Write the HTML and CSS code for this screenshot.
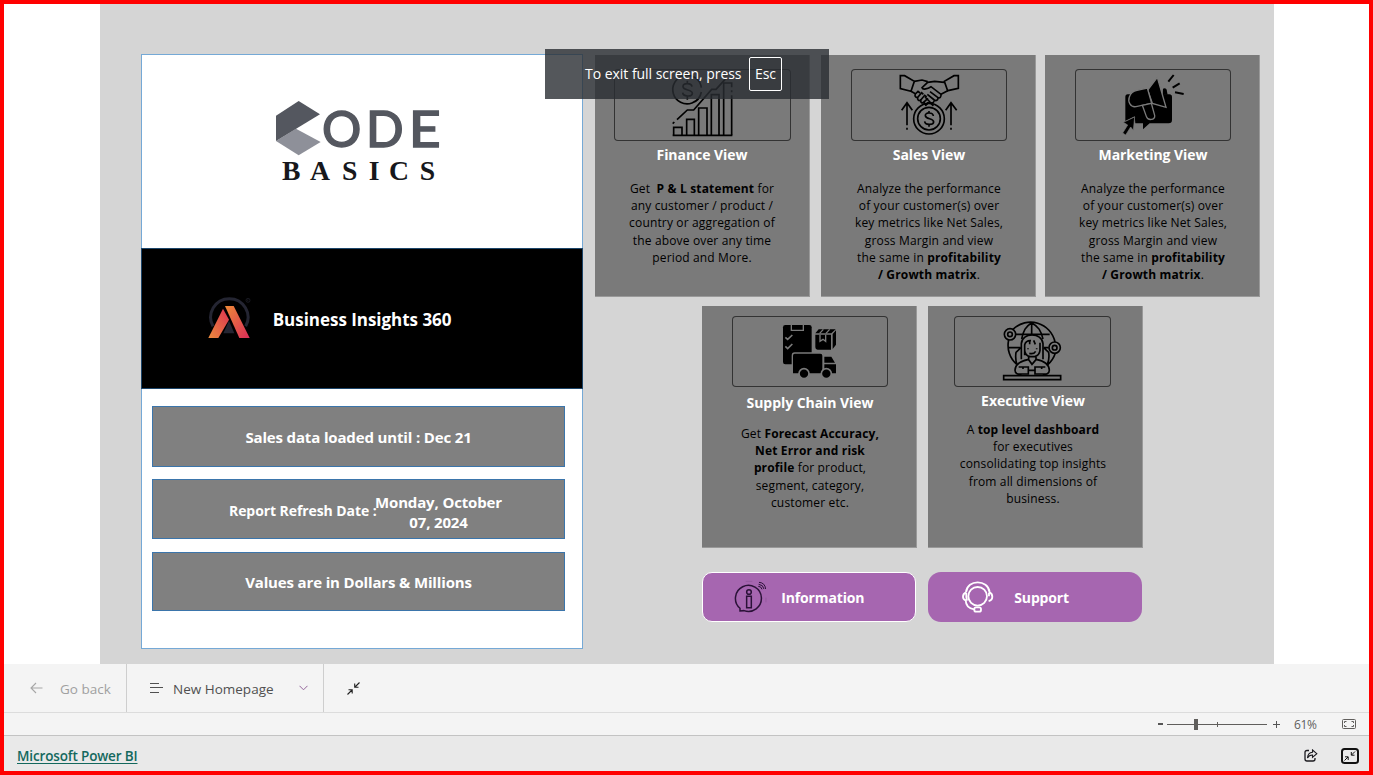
FILE: index.html
```html
<!DOCTYPE html>
<html lang="en">
<head>
<meta charset="utf-8">
<title>Business Insights 360</title>
<link rel="stylesheet" href="styles.css">
</head>
<body>
<div class="frame">
  <main class="stage">
    <div class="canvas">
      <section class="panel">
        <div class="brand">
          <svg class="brand-logo" viewBox="0 0 600 300">
            <path fill="#8e9099" d="M108 116 182 156 116 196 48 153z"/>
            <path fill="#54575f" d="M116 33 180 73 48 153V77z"/>
            <g class="logo-sans"><text x="186" y="170" textLength="118" lengthAdjust="spacingAndGlyphs">O</text><text x="318" y="170" textLength="113" lengthAdjust="spacingAndGlyphs">D</text><text x="446" y="170" textLength="96" lengthAdjust="spacingAndGlyphs">E</text></g>
            <text class="logo-serif" x="66 150 246 326 387 479" y="270">BASICS</text>
          </svg>
        </div>
        <div class="title-band">
          <svg class="title-logo" viewBox="50 45 140 135">
            <defs>
              <linearGradient id="ga" x1="0" y1="1" x2="1" y2="0"><stop offset="0" stop-color="#ec8b3d"/><stop offset="1" stop-color="#dc3152"/></linearGradient>
              <linearGradient id="gb" x1="0" y1="0" x2="1" y2="1"><stop offset="0" stop-color="#ee8a38"/><stop offset="1" stop-color="#da2c58"/></linearGradient>
            </defs>
            <path d="M68 139A56 56 0 1 1 166 139" fill="none" stroke="#242532" stroke-width="9"/>
            <path d="M116 122 132 160H99z" fill="#242532"/>
            <path d="M98 86 116 119 84 174H54z" fill="url(#ga)"/>
            <path d="M104 78H130L178 174H147z" fill="url(#gb)"/>
            <circle cx="173" cy="61" r="6" fill="none" stroke="#242532" stroke-width="2"/><path d="M171 64v-6h3v3h-3l3 3" fill="none" stroke="#242532"/>
          </svg>
          <h1>Business Insights 360</h1>
        </div>
        <div class="facts">
          <div class="fact fact-a"><span>Sales data loaded until : Dec 21</span></div>
          <div class="fact fact-b"><span class="refresh">Report Refresh Date :</span><span class="date">Monday, October<br>07, 2024</span></div>
          <div class="fact fact-c"><span>Values are in Dollars &amp; Millions</span></div>
        </div>
      </section>

      <section class="views">
        <div class="row row-top">
          <article class="card">
            <div class="icon-box finance">
              <svg viewBox="222 87 531 216" fill="none" stroke="#000" stroke-width="5">
                <path d="M398 286H577"/><path d="M401 286V262H426V286M440 286V238H463V286M476 286V204H501V286M514 286V164H537V286M551 286V129H575V142M575 166V286M575 151V157"/>
                <path d="M411 239 442 210H461L515 148H528L558 115H566M398 251l5-5"/>
                <path d="M456 189A43 43 0 1 1 484 143M484 156A43 43 0 0 1 456 189"/>
                <path d="M456 140C455 129 428 127 429 140 430 153 457 147 457 160 456 172 429 170 428 158M442 122V131M442 169V179"/>
              </svg>
            </div>
            <h2>Finance View</h2>
            <p>Get&nbsp; <b>P &amp; L statement</b> for<br>any customer / product /<br>country or aggregation of<br>the above over any time<br>period and More.</p>
          </article>
          <article class="card">
            <div class="icon-box">
              <svg viewBox="33 42 468 216" fill="none" stroke="#000" stroke-width="5">
                <path d="M181 62H194L223 79 213 109 181 101zM355 62H342L313 79 323 107 355 100z"/>
                <path d="M223 79 246 75 263 80M313 82 284 79 263 82 246 98C249 106 263 101 273 95L303 118 323 107M213 109 226 116"/>
                <path d="M303 118C304 127 299 130 294 128 294 136 288 139 283 135 282 144 276 147 269 141M270 110 294 128M262 118 283 135M255 126 270 141"/>
                <path d="M226 117C223 124 228 129 234 126 230 134 237 140 243 134 240 143 247 147 253 140 251 148 260 151 266 142M226 117 234 109 240 114M234 126 245 113 250 118M243 134 254 121 260 126M253 140 264 130"/>
                <circle cx="267" cy="191" r="46"/><circle cx="267" cy="191" r="34"/>
                <path d="M256 153 263 144H272L280 153"/>
                <path d="M280 183C279 171 255 171 256 182 257 194 281 189 281 201 280 211 255 211 254 199M267 168V175M267 207V215"/>
                <path d="M201 211V144M185 166 201 143 217 166M333 211V144M317 166 333 143 350 166M201 218V224M333 218V224"/>
              </svg>
            </div>
            <h2>Sales View</h2>
            <p>Analyze the performance<br>of your customer(s) over<br>key metrics like Net Sales,<br>gross Margin and view<br>the same in <b>profitability<br>/ Growth matrix</b>.</p>
          </article>
          <article class="card">
            <div class="icon-box">
              <svg viewBox="45 42 468 216">
                <path d="M203 118H328Q336 118 336 126V195Q336 205 326 205H269L249 223V205H226L224 184 196 198V126Q196 118 203 118z"/>
                <path d="M309 101Q320 97 321 110L323 119H308z"/>
                <path d="M292 67 318 157 277 145 263 105z" stroke="#7a7a7a" stroke-width="4"/>
                <path d="M262 99 275 145 228 155C211 158 203 140 208 126 212 114 220 108 231 106z" stroke="#7a7a7a" stroke-width="4"/>
                <path d="M247 151 274 145 284 181C287 196 263 198 259 184z" stroke="#7a7a7a" stroke-width="4"/>
                <path d="M224 186 190 202 203 210 188 234 197 240 212 216 220 226z" stroke="#7a7a7a" stroke-width="2"/>
                <g stroke="#000" stroke-width="6"><path d="M325 80 341 60M338 98 359 85M345 112 371 117"/></g>
              </svg>
            </div>
            <h2>Marketing View</h2>
            <p>Analyze the performance<br>of your customer(s) over<br>key metrics like Net Sales,<br>gross Margin and view<br>the same in <b>profitability<br>/ Growth matrix</b>.</p>
          </article>
        </div>
        <div class="row row-mid">
          <article class="card">
            <div class="icon-box low">
              <svg viewBox="96 48 468 213">
                <rect x="249" y="75" width="86" height="118" rx="7"/>
                <path d="M274 74V91H310V74" fill="none" stroke="#7a7a7a" stroke-width="4"/>
                <path d="M256 112 263 118 277 105M256 139 263 146 277 132" fill="none" stroke="#7a7a7a" stroke-width="5"/>
                <path d="M356 88H407L394 100H346zM346 104H393V149H353Q346 149 346 142zM398 102 408 91V134L398 147z"/>
                <path d="M370 88 359 100M389 88 378 100M360 104V124L369 118 377 124V104" fill="none" stroke="#7a7a7a" stroke-width="4"/>
                <path d="M284 159H361Q369 159 369 167V222H277V167Q277 159 284 159z" stroke="#7a7a7a" stroke-width="4"/>
                <path d="M373 170H394L405 188H373zM373 193H408V220H373z"/>
                <circle cx="312" cy="221" r="15" stroke="#7a7a7a" stroke-width="5"/><circle cx="379" cy="221" r="15" stroke="#7a7a7a" stroke-width="5"/>
              </svg>
            </div>
            <h2>Supply Chain View</h2>
            <p class="supply">Get <b>Forecast Accuracy,<br>Net Error and risk<br>profile</b> for product,<br>segment, category,<br>customer etc.</p>
          </article>
          <article class="card">
            <div class="icon-box exec">
              <svg viewBox="87 48 471 213" fill="none" stroke="#000" stroke-width="5">
                <path d="M264 88A75 75 0 0 1 390 126M251 120A75 75 0 0 0 275 193M391 159A75 75 0 0 1 367 195M320 69V105M320 69C302 79 295 92 290 117M320 69C340 79 348 92 354 117M271 103H374M250 143H287M356 143H371M288 143 273 157Q270 177 276 193M356 143 371 157Q374 177 367 193"/>
                <circle cx="255" cy="103" r="17"/><circle cx="255" cy="103" r="7"/><circle cx="389" cy="143" r="17"/><circle cx="389" cy="143" r="7"/>
                <path d="M289 178V131C291 96 351 96 354 131V178M299 166V134Q303 121 318 122M345 128V151Q343 166 329 170H316Q300 167 299 151M314 121V133M326 121 331 133M309 145V148M335 145V148M313 160Q326 164 332 154M311 171V179L321 193 333 179V171"/>
                <path d="M311 178C286 183 270 194 270 211 270 221 279 224 291 222H310V201H281M333 178C358 183 373 194 373 211 373 221 364 224 352 222H330V201H361M310 211H330M294 201V207M350 201V207"/>
                <path d="M236 227H407V239H236z"/>
              </svg>
            </div>
            <h2 class="exec-title">Executive View</h2>
            <p class="exec-text">A <b>top level dashboard</b><br>for executives<br>consolidating top insights<br>from all dimensions of<br>business.</p>
          </article>
        </div>
        <div class="row row-buttons">
          <div class="pill outlined">
            <svg class="info-icon" viewBox="115 45 100 100" fill="none" stroke="#2b1238" stroke-width="4.5">
              <path d="M133 130A39 39 0 1 1 145 137L133 138z"/><circle cx="160" cy="81" r="7"/><path d="M153 94H167V128H153z"/>
              <path d="M188 64Q197 64 199 73M189 58Q203 59 205 72M190 52Q208 53 210 72" stroke-width="3"/><path d="M211 98v14M150 49h20" stroke-width="1" opacity=".4"/>
            </svg>
            <span>Information</span>
          </div>
          <div class="pill solid">
            <svg class="support-icon" viewBox="797 45 100 100" fill="none" stroke="#fff" stroke-width="5.5">
              <circle cx="847" cy="94" r="28"/>
              <path d="M812 82C816 42 878 42 883 82Q891 86 891 95 891 106 880 108M812 82Q803 86 803 95 803 103 811 106Q812 130 836 133M881 83V94M813 84Q812 94 815 107"/>
              <rect x="837" y="127" width="20" height="13" rx="5"/>
            </svg>
            <span>Support</span>
          </div>
        </div>
      </section>
    </div>
    <div class="toast"><span>To exit full screen, press</span><kbd>Esc</kbd></div>
  </main>

  <nav class="toolbar">
    <div class="tool back">
      <svg width="13" height="12" viewBox="0 0 13 12" fill="none" stroke="#a6a6a6" stroke-width="1.1"><path d="M12.5 6H1M6 1 1 6l5 5"/></svg>
      <span>Go back</span>
    </div>
    <div class="tool pages">
      <svg width="13" height="10" viewBox="0 0 13 10" stroke="#505050"><path d="M0 .5H9M0 4.500H13M0 9.500H9"/></svg>
      <span>New Homepage</span>
      <svg class="chev" width="9" height="6" viewBox="0 0 9 6" fill="none" stroke="#93659b"><path d="M.5.8 4.500 4.800 8.500.8"/></svg>
    </div>
    <div class="tool shrink">
      <svg width="13" height="13" viewBox="0 0 13 13" fill="none" stroke="#222" stroke-width="1.1"><path d="M12.500.5 8 5M7.700 1.500V5.200H11.500M.5 12.500 5 8M1.500 7.700H5.200V11.500"/></svg>
    </div>
  </nav>

  <div class="zoombar">
    <span class="minus"></span>
    <div class="slider"><i class="track"></i><i class="thumb"></i><i class="tick"></i></div>
    <svg class="plus" width="7" height="7" viewBox="0 0 7 7" stroke="#555"><path d="M0 3.500H7M3.500 0V7"/></svg>
    <span class="percent">61%</span>
    <svg width="14" height="10" viewBox="0 0 14 10" fill="none" stroke="#605e5c"><rect x=".5" y=".5" width="13" height="9" rx="1"/><path d="M2.500 4V2.500H4.500M9.500 2.500H11.500V4M11.500 6V7.500H9.500M4.500 7.500H2.500V6"/></svg>
  </div>

  <footer class="footer">
    <a href="#">Microsoft Power BI</a>
    <div class="footer-icons">
      <svg width="14" height="13" viewBox="0 0 14 13" fill="none" stroke="#1b1a1f" stroke-width="1.300"><path d="M5 1.500H3Q1 1.500 1 3.500V10Q1 12 3 12H9Q11 12 11 10V9"/><path d="M8.500 1 12.800 4.700 8.500 8.300V6Q5 6 3.500 9 3.800 3.500 8.500 3.200z" stroke-width="1.100"/></svg>
      <svg width="20" height="18" viewBox="0 0 20 18" fill="none" stroke="#111"><rect x="2" y="2" width="16" height="14" rx="2.500" stroke-width="2"/><path d="M15 4.500 11.500 8M11.300 5V8.200H14.500M4.500 13.500 8 10M5 9.800H8.200V13"/></svg>
    </div>
  </footer>
</div>
</body>
</html>
```
FILE: styles.css
```css
* { box-sizing: border-box; }
body { margin: 0; font-family: "Open Sans", "Noto Sans", sans-serif; }
svg { display: block; flex: none; }
h1, h2, p { margin: 0; }

.frame { width: 1373px; height: 775px; border: 4px solid #f00; display: flex; flex-direction: column; background: #fff; overflow: hidden; }
.stage { position: relative; height: 660px; flex: none; padding: 0 95px 0 96px; }
.canvas { height: 660px; background: #d5d5d5; display: flex; gap: 12px; padding: 50px 0 0 41px; }

/* Left summary panel */
.panel { width: 442px; height: 595px; border: 1px solid #75a9d6; background: #fff; flex: none; }
.brand { height: 193px; padding: 35px 0 0 118px; }
.brand-logo { width: 200px; height: 100px; }
.logo-sans { font: 500 153px Lato, sans-serif; fill: #54575f; stroke: #54575f; stroke-width: 4; }
.logo-serif { font: 700 83px "Liberation Serif", serif; fill: #17181c; }
.title-band { height: 141px; margin: 0 -1px; background: #000; border: 1px solid #1c456a; display: flex; align-items: center; }
.title-logo { width: 46.700px; height: 45px; margin: 0 0 2px 65px; }
h1 { margin: 2px 0 0 19px; font-size: 17px; line-height: 24px; font-weight: 700; color: #fff; white-space: nowrap; letter-spacing: -.03px; }
.facts { display: flex; flex-direction: column; padding: 17px 0 0 10px; }
.fact { width: 413px; background: #808080; border: 1px solid #3b75ab; color: #fff; font-size: 15px; font-weight: 700; line-height: 20px; display: flex; align-items: center; justify-content: center; white-space: nowrap; letter-spacing: -.15px; }
.fact-a { height: 61px; }
.fact-b { height: 60px; margin-top: 12px; justify-content: flex-start; padding: 3px 0 0 76px; }
.fact-c { height: 59px; margin-top: 13px; }
.refresh { width: 146px; font-size: 14px; letter-spacing: -.08px; }
.date { width: 127px; margin-top: 2px; text-align: center; }

/* View cards */
.views { width: 665px; padding-top: 1px; }
.row { display: flex; }
.row-top { gap: 11px; }
.row-top .card:last-child { margin-left: -2px; }
.row-mid { gap: 11px; padding: 9px 0 0 107px; }
.row-buttons { gap: 12px; padding: 24px 0 0 107px; }
.card { width: 215px; height: 242px; background: #7a7a7a; border-right: 1px solid #999; border-bottom: 1px solid #999; flex: none; }
.icon-box { width: 156px; height: 72px; margin: 14px 0 0 30px; border-radius: 4px; box-shadow: inset 0 0 0 1px #333; }
.icon-box svg { width: 100%; height: 100%; }
.icon-box.finance { width: 177px; margin-left: 19px; }
.icon-box.low { height: 71px; margin-top: 10px; }
.icon-box.exec { width: 157px; height: 71px; margin: 10px 0 0 26px; }
h2 { margin: 4px -2px 0 0; font-size: 14px; line-height: 20px; font-weight: 700; color: #fff; text-align: center; letter-spacing: -.05px; }
.finance + h2 { margin-right: 0; }
.card p { margin: 15px -2px 0 0; font-size: 12px; line-height: 17.200px; color: #000; text-align: center; white-space: nowrap; letter-spacing: .15px; }
.card .finance ~ p { margin-right: 0; }
.low + h2 { margin-top: 6px; }
.card .supply { margin-top: 12px; }
h2.exec-title { margin: 4px 0 0 -4px; }
.card .exec-text { margin: 10px 0 0 -4px; }

.pill { width: 214px; height: 50px; background: #a666b0; color: #fff; font-size: 14px; font-weight: 700; letter-spacing: -.15px; display: flex; align-items: center; white-space: nowrap; }
.pill.outlined { border: 1.500px solid #fff; border-radius: 10px; padding-left: 31px; }
.pill.solid { border-radius: 13px; padding-left: 33px; }
.info-icon, .support-icon { width: 33.300px; height: 33.300px; }
.info-icon + span { margin-left: 14px; }
.support-icon + span { margin-left: 20px; }

.toast { position: absolute; left: 541px; top: 45px; width: 284px; height: 50px; padding-left: 40px; background: rgba(41, 45, 50, .8); color: #fff; font-size: 14px; display: flex; align-items: center; white-space: nowrap; }
.toast span { width: 164px; margin-top: -2px; letter-spacing: -.03px; }
.toast kbd { width: 33px; height: 34px; padding-bottom: 2px; border: 1px solid #fff; border-radius: 2px; font: inherit; display: flex; align-items: center; justify-content: center; }

/* Bottom bars */
.toolbar { height: 49px; flex: none; background: #f4f4f4; border-bottom: 1px solid #dcdcdc; display: flex; font-size: 13.500px; color: #505050; white-space: nowrap; }
.tool { display: flex; align-items: center; }
.tool span { padding-top: 1px; }
.back { width: 123px; padding-left: 26px; gap: 17px; color: #a0a0a0; border-right: 1px solid #cecece; }
.pages { width: 197px; padding-left: 23px; gap: 10px; border-right: 1px solid #cecece; }
.pages span { width: 101px; }
.chev { margin-left: 15px; }
.shrink { padding-left: 23px; }
.zoombar { height: 23px; flex: none; background: #f4f4f4; border-bottom: 1px solid #c3c3c3; display: flex; align-items: center; padding-left: 1154px; font-size: 12px; color: #605e5c; }
.minus { width: 5px; height: 2px; background: #555; margin-right: 4px; }
.slider { position: relative; width: 100px; height: 12px; }
.slider i { position: absolute; background: #605e5c; }
.track { left: 0; top: 6px; width: 100px; height: 1px; }
.thumb { left: 27px; top: 1px; width: 4px; height: 11px; }
.tick { left: 50px; top: 4px; width: 1px; height: 5px; }
.plus { margin-left: 6px; }
.percent { width: 62px; padding-left: 14px; letter-spacing: -.3px; }
.footer { height: 35px; flex: none; background: #e9e9e9; display: flex; align-items: center; justify-content: space-between; padding: 4px 9px 0 13px; }
.footer a { color: #13685d; font-size: 13.500px; font-weight: 600; line-height: 20px; letter-spacing: -.15px; white-space: nowrap; text-underline-offset: 2px; }
.footer-icons { display: flex; align-items: center; gap: 22px; }
```
